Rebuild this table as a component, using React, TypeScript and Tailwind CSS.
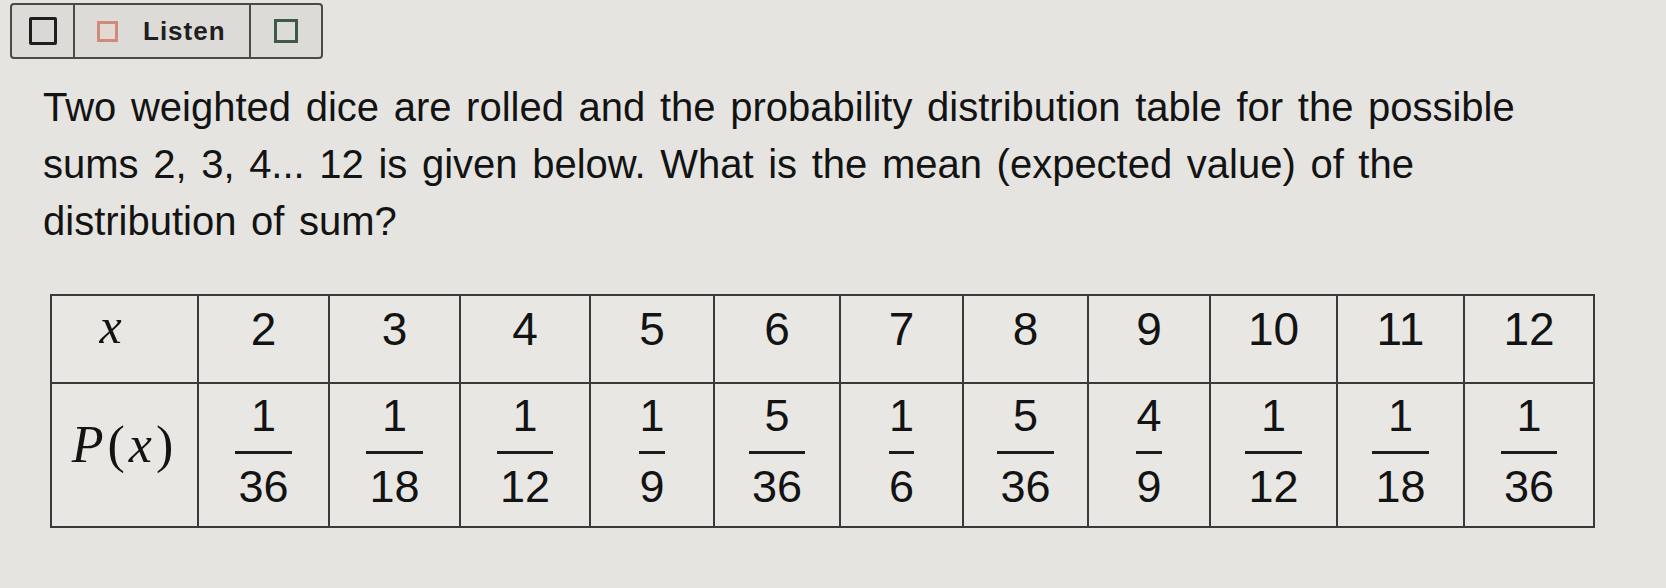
import React from 'react';

const xs = ['2', '3', '4', '5', '6', '7', '8', '9', '10', '11', '12'];
const probs: [string, string][] = [
  ['1', '36'],
  ['1', '18'],
  ['1', '12'],
  ['1', '9'],
  ['5', '36'],
  ['1', '6'],
  ['5', '36'],
  ['4', '9'],
  ['1', '12'],
  ['1', '18'],
  ['1', '36'],
];
const widths = [131, 131, 130, 124, 126, 123, 125, 122, 127, 127, 130];

function Fraction({ num, den }: { num: string; den: string }) {
  return (
    <div className="flex justify-center">
      <div className="flex flex-col items-center leading-none">
        <span className="pb-[13px]">{num}</span>
        <span className={den.length > 1 ? 'h-[3px] self-stretch bg-[#1c1c1c] mx-[-3px]' : 'h-[3px] self-stretch bg-[#1c1c1c]'} />
        <span className="pt-[10px]">{den}</span>
      </div>
    </div>
  );
}

function Toolbar() {
  return (
    <div className="flex h-[56px] w-[313px] rounded-[4px] border-2 border-[#4a4a48] bg-[#dcdbd7]">
      <div className="flex w-[63px] items-center justify-center border-r-2 border-[#4a4a48]">
        <span className="h-[28px] w-[28px] rounded-[2px] border-[3px] border-[#1e1e1e] bg-[#d9d8d4]" />
      </div>
      <div className="flex w-[176px] items-center gap-[25px] border-r-2 border-[#4a4a48] pl-[22px]">
        <span className="h-[21px] w-[21px] border-[3px] border-[#d08a7c] bg-[#e3d9d3]" />
        <span className="text-[26px] font-bold tracking-[1px] text-[#1f1f22] [font-family:'Liberation_Sans',Arial,sans-serif]">
          Listen
        </span>
      </div>
      <div className="flex flex-1 items-center justify-center">
        <span className="h-[24px] w-[24px] border-[3px] border-[#3e5a47] bg-[#dcdcd6]" />
      </div>
    </div>
  );
}

export default function App() {
  return (
    <div className="h-[588px] w-[1666px] overflow-hidden bg-[#e5e4e0] pl-[10px] pt-[3px] text-[#131313]">
      <Toolbar />

      <p className="ml-[33px] mt-[20px] text-[40px] leading-[57px] [word-spacing:3.5px] [font-family:'Liberation_Sans',Arial,sans-serif]">
        Two weighted dice are rolled and the probability distribution table for the possible
        <br />
        sums 2, 3, 4... 12 is given below. What is the mean (expected value) of the
        <br />
        distribution of sum?
      </p>

      <table className="ml-[40px] mt-[44px] border-collapse border-2 border-[#333] bg-[#e8e7e3]">
        <tbody>
          <tr className="h-[88px]">
            <td className="w-[147px] border-2 border-[#3a3a3a] pr-[28px] pt-[5px] text-center align-top text-[50px] leading-none italic [font-family:'Liberation_Serif',serif]">
              x
            </td>
            {xs.map((v, i) => (
              <td
                key={v}
                className="border-2 border-[#3a3a3a] pt-[10px] text-center align-top text-[46px] leading-none [font-family:'Liberation_Sans',Arial,sans-serif]"
                style={{ width: widths[i] }}
              >
                {v}
              </td>
            ))}
          </tr>
          <tr className="h-[144px]">
            <td className="border-2 border-[#3a3a3a] pt-[35px] text-center align-top text-[52px] leading-none italic tracking-[4px] [font-family:'Liberation_Serif',serif]">
              P<span className="not-italic">(</span>x<span className="not-italic">)</span>
            </td>
            {probs.map(([n, d], i) => (
              <td
                key={i}
                className="border-2 border-[#3a3a3a] pt-[9px] align-top text-[45px] leading-none [font-family:'Liberation_Sans',Arial,sans-serif]"
              >
                <Fraction num={n} den={d} />
              </td>
            ))}
          </tr>
        </tbody>
      </table>
    </div>
  );
}
